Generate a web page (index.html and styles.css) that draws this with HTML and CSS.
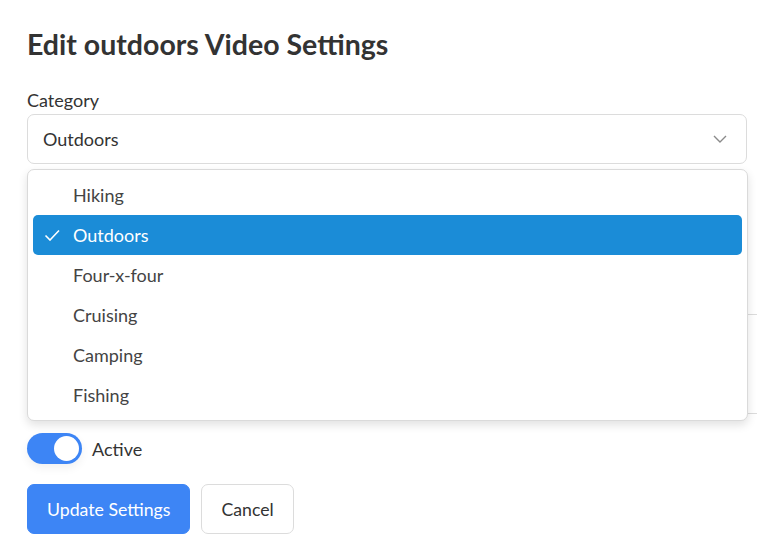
FILE: index.html
```html
<!DOCTYPE html>
<html>
<head>
<meta charset="utf-8">
<link rel="stylesheet" href="styles.css">
</head>
<body>
<div class="page">
  <h1 class="title">Edit outdoors Video Settings</h1>
  <div class="field">
    <label class="label">Category</label>
    <div class="select-wrap">
      <div class="select">
        <span>Outdoors</span>
        <svg class="chev" width="14" height="8" viewBox="0 0 14 8"><path d="M1 1l6 6 6-6" fill="none" stroke="#8a8a8a" stroke-width="1.4"/></svg>
      </div>
      <ul class="menu">
        <li class="opt">Hiking</li>
        <li class="opt sel"><svg class="check" width="16" height="12" viewBox="0 0 16 12"><path d="M1.5 6.5l4.5 4.5 9-9.5" fill="none" stroke="#fff" stroke-width="1.6"/></svg>Outdoors</li>
        <li class="opt">Four-x-four</li>
        <li class="opt">Cruising</li>
        <li class="opt">Camping</li>
        <li class="opt">Fishing</li>
      </ul>
    </div>
  </div>
  <div class="hidden-field">
    <div class="textarea"></div>
  </div>
  <div class="toggle-row">
    <span class="toggle"><span class="knob"></span></span>
    <span class="toggle-label">Active</span>
  </div>
  <div class="actions">
    <button class="btn primary">Update Settings</button>
    <button class="btn secondary">Cancel</button>
  </div>
</div>
</body>
</html>
```
FILE: styles.css
```css
html, body {
  margin: 0;
  padding: 0;
  overflow: hidden;
  background: #fff;
}
body {
  font-family: Lato, "Open Sans", sans-serif;
  color: #333;
}
.page {
  padding: 25px 0 0 27px;
  width: 720px;
}
.title {
  margin: 0;
  font-size: 28.5px;
  font-weight: 700;
  color: #333;
  line-height: 38px;
}
.field {
  margin-top: 26px;
}
.label {
  display: block;
  font-size: 18px;
  line-height: 22px;
  color: #333;
  margin-bottom: 3px;
}
.select-wrap {
  position: relative;
}
.select {
  box-sizing: border-box;
  height: 50px;
  border: 1px solid #dcdcdc;
  border-radius: 7px;
  display: flex;
  align-items: center;
  justify-content: space-between;
  padding: 0 19px 0 15px;
  font-size: 18px;
  color: #333;
}
.chev {
  display: block;
}
.menu {
  position: absolute;
  z-index: 5;
  top: 55px;
  left: 0;
  width: 721px;
  box-sizing: border-box;
  margin: 0;
  padding: 5px 5px;
  list-style: none;
  background: #fff;
  border: 1px solid #dadada;
  border-radius: 7px;
  box-shadow: 0 4px 10px rgba(0,0,0,0.12);
}
.opt {
  height: 40px;
  display: flex;
  align-items: center;
  padding-left: 40px;
  font-size: 18px;
  color: #444;
  border-radius: 5px;
  position: relative;
}
.opt.sel {
  background: #1b8cd7;
  color: #fff;
}
.check {
  position: absolute;
  left: 11px;
  top: 14px;
}
.hidden-field {
  margin-top: 150px;
}
.textarea {
  height: 98px;
  width: 760px;
  border: 1px solid #dcdcdc;
  border-radius: 7px;
}
.toggle-row {
  display: flex;
  align-items: center;
  margin-top: 19px;
  gap: 10px;
}
.toggle {
  width: 55px;
  height: 31px;
  border-radius: 16px;
  background: #3d85f5;
  position: relative;
  box-shadow: 0 4px 10px rgba(0,0,0,0.06);
}
.knob {
  position: absolute;
  right: 3px;
  top: 3px;
  width: 25px;
  height: 25px;
  border-radius: 50%;
  background: #fff;
}
.toggle-label {
  font-size: 18px;
  color: #333;
}
.actions {
  display: flex;
  gap: 11px;
  margin-top: 20px;
}
.btn {
  font-family: Lato, "Open Sans", sans-serif;
  font-size: 17.7px;
  height: 50px;
  border-radius: 7px;
  padding: 0 19px;
  cursor: pointer;
}
.primary {
  background: #3d85f5;
  color: #fff;
  border: 1px solid #3d85f5;
}
.secondary {
  background: #fff;
  color: #333;
  border: 1px solid #dcdcdc;
}
```
